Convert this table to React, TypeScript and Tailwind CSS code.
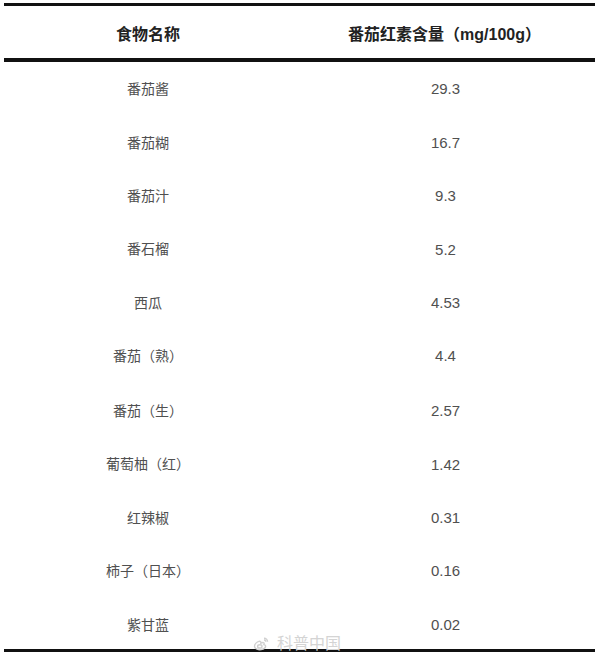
const rows: [string, string][] = [
    ['番茄酱', '29.3'],
    ['番茄糊', '16.7'],
    ['番茄汁', '9.3'],
    ['番石榴', '5.2'],
    ['西瓜', '4.53'],
    ['番茄（熟）', '4.4'],
    ['番茄（生）', '2.57'],
    ['葡萄柚（红）', '1.42'],
    ['红辣椒', '0.31'],
    ['柿子（日本）', '0.16'],
    ['紫甘蓝', '0.02']
];

const font = { fontFamily: '"Liberation Sans", "Noto Sans CJK SC", sans-serif' };

const WeiboMark = () => (
    <svg width="16" height="14" viewBox="0 0 16 14" fill="none" stroke="#d0d0d0" strokeWidth="1.4">
        <path d="M6.5 4.2C3.6 5.2 1.2 7.6 1.6 9.8c.4 2.2 3.6 3.3 6.6 2.8 3-.5 4.8-2.2 4.3-3.8-.3-1-1.6-1.2-1.6-1.2s.8-1.6-.4-2c-1-.4-2.6.6-2.6.6s.6-1.9-1.4-2z" />
        <ellipse cx="6.8" cy="9.4" rx="2.2" ry="1.6" />
        <path d="M11 1.2c2 0 3.6 1.6 3.6 3.6M11 3c1 0 1.8.8 1.8 1.8" />
    </svg>
);

const App = () => {
    return (
        <div className="relative w-[600px] h-[655px] bg-white pt-[3px] pl-[4px] pr-[5px]" style={font}>
            <div className="border-t-[3px] border-b-[3px] border-[#111]">
                <div className="grid grid-cols-[288px_1fr] h-[56px] items-center border-b-[4px] border-[#111] text-[16px] font-bold text-[#222]">
                    <div className="text-center pt-[5px]">食物名称</div>
                    <div className="text-center pt-[5px] pl-[2px]">番茄红素含量（mg/100g）</div>
                </div>
                {rows.map(([name, value], i) => (
                    <div
                        key={name}
                        className="grid grid-cols-[288px_1fr] h-[53.4px] items-center text-[14px] text-[#505050]"
                    >
                        <div className={i > 5 ? 'text-center pt-[5px]' : 'text-center pt-[2px]'}>{name}</div>
                        <div className={i > 5 ? 'text-center pt-[5px] pl-[4px] text-[15px]' : 'text-center pt-[2px] pl-[4px] text-[15px]'}>
                            {value}
                        </div>
                    </div>
                ))}
            </div>

            {/* watermark */}
            <div className="absolute left-[253px] top-[632px] flex items-center gap-[8px] text-[16px] text-[#d4d4d4]">
                <WeiboMark />
                <span>科普中国</span>
            </div>
        </div>
    );
};

export default App;
